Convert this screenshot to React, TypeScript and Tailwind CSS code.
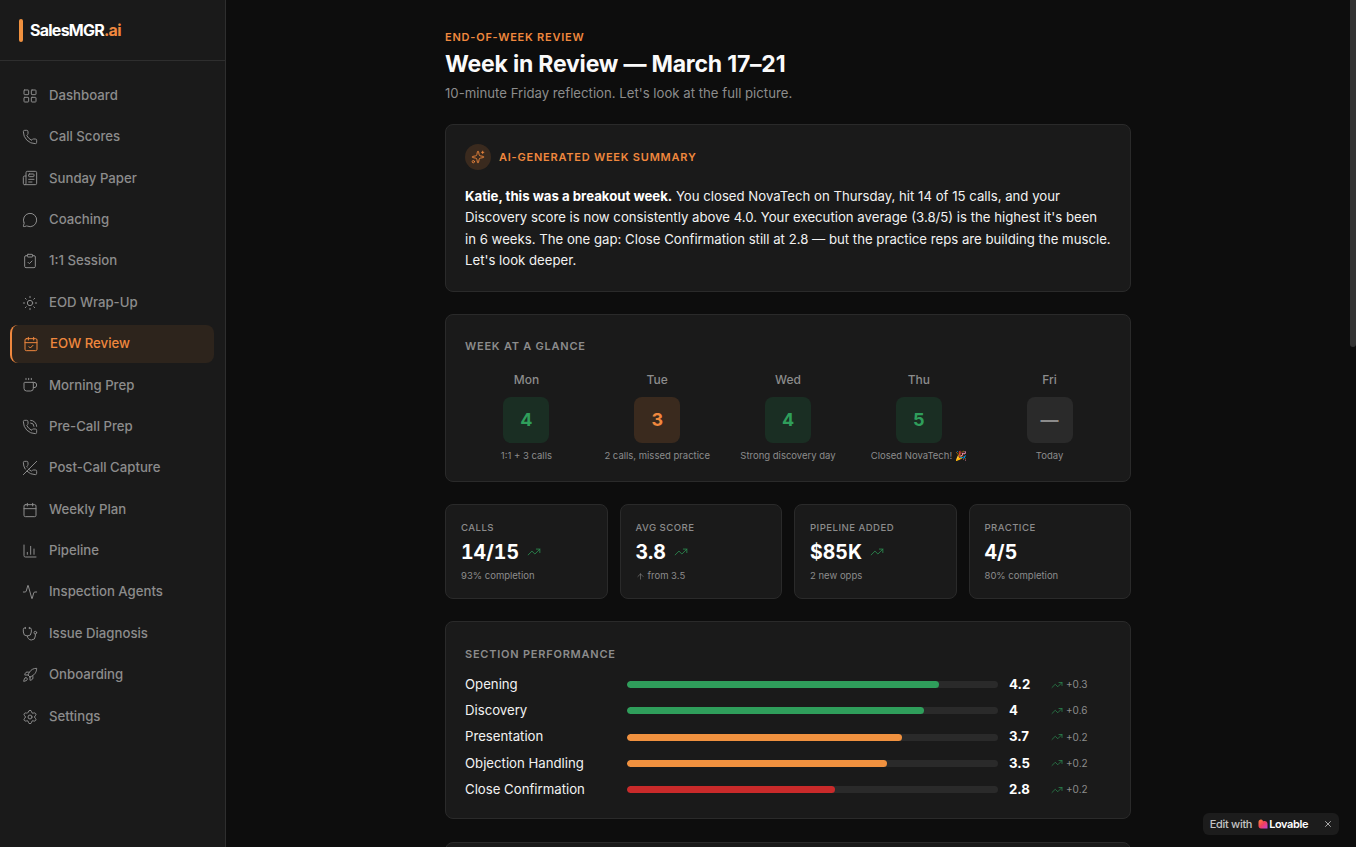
import {
  Activity, Calendar, CalendarCheck, ChartColumn, ClipboardCheck, Coffee, LayoutGrid, MessageCircle, Newspaper,
  Phone, PhoneCall, PhoneOff, Rocket, Settings, Sparkles, Stethoscope, Sun, TrendingUp, ArrowUp, X,
} from 'lucide-react'

const nav = [
  { label: 'Dashboard', icon: LayoutGrid },
  { label: 'Call Scores', icon: Phone },
  { label: 'Sunday Paper', icon: Newspaper },
  { label: 'Coaching', icon: MessageCircle },
  { label: '1:1 Session', icon: ClipboardCheck },
  { label: 'EOD Wrap-Up', icon: Sun },
  { label: 'EOW Review', icon: CalendarCheck, active: true },
  { label: 'Morning Prep', icon: Coffee },
  { label: 'Pre-Call Prep', icon: PhoneCall },
  { label: 'Post-Call Capture', icon: PhoneOff },
  { label: 'Weekly Plan', icon: Calendar },
  { label: 'Pipeline', icon: ChartColumn },
  { label: 'Inspection Agents', icon: Activity },
  { label: 'Issue Diagnosis', icon: Stethoscope },
  { label: 'Onboarding', icon: Rocket },
  { label: 'Settings', icon: Settings },
]

const days = [
  { day: 'Mon', score: '4', note: '1:1 + 3 calls', box: 'bg-[#1a2e23] text-[#2f9e5b]' },
  { day: 'Tue', score: '3', note: '2 calls, missed practice', box: 'bg-[#3a2a1e] text-[#f0883e]' },
  { day: 'Wed', score: '4', note: 'Strong discovery day', box: 'bg-[#1a2e23] text-[#2f9e5b]' },
  { day: 'Thu', score: '5', note: 'Closed NovaTech! 🎉', box: 'bg-[#1a2e23] text-[#2f9e5b]' },
  { day: 'Fri', score: '—', note: 'Today', box: 'bg-[#2a2a2a] text-[#8c8c8c]' },
]

const stats = [
  { label: 'CALLS', value: '14/15', note: '93% completion', trend: true },
  { label: 'AVG SCORE', value: '3.8', note: 'from 3.5', trend: true, up: true },
  { label: 'PIPELINE ADDED', value: '$85K', note: '2 new opps', trend: true },
  { label: 'PRACTICE', value: '4/5', note: '80% completion' },
]

const sections = [
  { name: 'Opening', score: '4.2', delta: '+0.3', fill: 'w-[84%] bg-[#2f9e5b]' },
  { name: 'Discovery', score: '4', delta: '+0.6', fill: 'w-[80%] bg-[#2f9e5b]' },
  { name: 'Presentation', score: '3.7', delta: '+0.2', fill: 'w-[74%] bg-[#f0913f]' },
  { name: 'Objection Handling', score: '3.5', delta: '+0.2', fill: 'w-[70%] bg-[#f0913f]' },
  { name: 'Close Confirmation', score: '2.8', delta: '+0.2', fill: 'w-[56%] bg-[#c92a2a]' },
]

export default function App() {
  return (
    <div className="flex h-screen bg-[#0d0d0d] font-['Inter',sans-serif] text-white overflow-hidden">
      {/* Sidebar */}
      <aside className="w-[226px] shrink-0 bg-[#1a1a1a] border-r border-[#2e2e2e] flex flex-col">
        <div className="h-[61px] shrink-0 border-b border-[#2e2e2e] flex items-center pl-[19px] gap-[7.5px]">
          <div className="w-[3.5px] h-[23px] rounded-full bg-[#f0913f]" />
          <span className="text-[16px] font-bold tracking-[-0.75px]">
            SalesMGR<span className="text-[#f0883e]">.ai</span>
          </span>
        </div>
        <nav className="flex flex-col gap-1 pt-[16px] pl-[10px] pr-[11px]">
          {nav.map(item => {
            const Icon = item.icon
            return (
              <div
                key={item.label}
                className={item.active
                  ? 'flex items-center gap-[11px] h-[37.4px] pl-[11px] rounded-lg bg-[#2d241c] border-l-2 border-[#f0883e] text-[#f0883e] text-[13.2px] font-medium'
                  : 'flex items-center gap-[11px] h-[37.4px] pl-[12px] rounded-lg text-[#8c8c8c] text-[13.2px] font-medium'}
              >
                <Icon size={16} strokeWidth={1.5} />
                <span>{item.label}</span>
              </div>
            )
          })}
        </nav>
      </aside>

      {/* Main */}
      <main className="flex-1 overflow-y-auto pr-[6px]">
        <div className="w-[686px] mx-auto pt-[29px] pb-8 flex flex-col">
          <p className="text-[11px] font-semibold tracking-[0.77px] text-[#f0883e] leading-[16px]">END-OF-WEEK REVIEW</p>
          <h1 className="text-[23px] font-bold tracking-[-0.2px] leading-[32px] mt-[3px] text-[#fafafa]">Week in Review — March 17–21</h1>
          <p className="text-[13.2px] text-[#8c8c8c] leading-[20px] mt-[3px]">10-minute Friday reflection. Let's look at the full picture.</p>

          <div className="mt-[21px] flex flex-col gap-[22.4px]">
            {/* AI summary */}
            <section className="h-[167.6px] bg-[#1a1a1a] border border-[#2a2a2a] rounded-lg px-[19px] pt-[19px]">
              <div className="flex items-center gap-2">
                <div className="w-[26px] h-[26px] rounded-full bg-[#3a2a1e] flex items-center justify-center text-[#f0883e]">
                  <Sparkles size={14} strokeWidth={1.5} />
                </div>
                <span className="text-[11px] font-semibold tracking-[0.77px] text-[#f0883e]">AI-GENERATED WEEK SUMMARY</span>
              </div>
              <p className="mt-[16px] text-[13.2px] leading-[21.4px] text-[#f2f2f2]">
                <strong className="font-bold text-white">Katie, this was a breakout week.</strong> You closed NovaTech on Thursday, hit 14 of 15 calls, and your Discovery score is now consistently above 4.0. Your execution average (3.8/5) is the highest it's been in 6 weeks. The one gap: Close Confirmation still at 2.8 — but the practice reps are building the muscle. Let's look deeper.
              </p>
            </section>

            {/* Week at a glance */}
            <section className="h-[168px] bg-[#1a1a1a] border border-[#2a2a2a] rounded-lg px-[19px] pt-[23px]">
              <h2 className="text-[11px] font-semibold tracking-[0.77px] text-[#8c8c8c] leading-[16px]">WEEK AT A GLANCE</h2>
              <div className="grid grid-cols-5 gap-2 mt-[18px]">
                {days.map(d => (
                  <div key={d.day} className="flex flex-col items-center">
                    <span className="text-[12px] font-medium text-[#8c8c8c] leading-[16px]">{d.day}</span>
                    <div className={`w-[46px] h-[46px] rounded-lg mt-[9px] flex items-center justify-center text-[18px] font-bold ${d.box}`}>{d.score}</div>
                    <span className="text-[9.5px] text-[#8c8c8c] leading-[14px] mt-[6px]">{d.note}</span>
                  </div>
                ))}
              </div>
            </section>

            {/* Stat cards */}
            <div className="grid grid-cols-4 gap-3">
              {stats.map(s => (
                <div key={s.label} className="h-[94.6px] bg-[#1a1a1a] border border-[#2a2a2a] rounded-lg px-[15px] pt-[16px]">
                  <p className="text-[9.6px] font-medium tracking-[0.45px] text-[#8c8c8c] leading-[14px]">{s.label}</p>
                  <div className="flex items-center gap-2 mt-[3px]">
                    <span className="text-[19.5px] font-bold tabular-nums leading-[28px] text-white">{s.value}</span>
                    {s.trend && <TrendingUp size={14} strokeWidth={1.5} className="text-[#2b8a50]" />}
                  </div>
                  <p className="flex items-center gap-[3px] text-[9.5px] text-[#8c8c8c] leading-[14px] mt-[3px]">
                    {s.up && <ArrowUp size={9} strokeWidth={1.5} />}
                    {s.note}
                  </p>
                </div>
              ))}
            </div>

            {/* Section performance */}
            <section className="h-[198px] bg-[#1a1a1a] border border-[#2a2a2a] rounded-lg px-[19px] pt-[24px]">
              <h2 className="text-[11px] font-semibold tracking-[0.77px] text-[#8c8c8c] leading-[16px]">SECTION PERFORMANCE</h2>
              <div className="flex flex-col mt-[9px]">
                {sections.map(s => (
                  <div key={s.name} className="flex items-center h-[26.3px]">
                    <span className="w-[162px] shrink-0 text-[13.2px] text-[#f2f2f2]">{s.name}</span>
                    <div className="w-[371px] shrink-0 h-[7px] rounded-full bg-[#2a2a2a] overflow-hidden">
                      <div className={`h-full rounded-full ${s.fill}`} />
                    </div>
                    <span className="w-[42px] pl-[11px] shrink-0 text-[13.2px] font-bold text-white">{s.score}</span>
                    <div className="flex items-center gap-[3px] ml-[11px] text-[10px] text-[#8c8c8c]">
                      <TrendingUp size={12} strokeWidth={1.5} className="text-[#2b8a50]" />
                      <span>{s.delta}</span>
                    </div>
                  </div>
                ))}
              </div>
            </section>

            {/* Next card, below the fold */}
            <section className="h-[1180px] bg-[#1a1a1a] border border-[#2a2a2a] rounded-lg" />
          </div>
        </div>
      </main>

      {/* Scrollbar thumb */}
      <div className="fixed top-0 right-0 w-[6px] h-[347px] rounded-b-full bg-[#333333]" />

      {/* Edit with Lovable badge */}
      <div className="fixed right-[17px] bottom-[12px] h-[22px] flex items-center rounded-md bg-[#1c1c1c] pl-[7px] pr-[6px] text-[11px]">
        <span className="text-[#c4c4c4] font-medium tracking-[-0.3px]">Edit with</span>
        <svg width="10" height="10" viewBox="0 0 10 10" className="ml-[6px]">
          <defs>
            <linearGradient id="lov" x1="0" y1="0" x2="1" y2="1">
              <stop offset="0" stopColor="#ff8a3c" />
              <stop offset="0.5" stopColor="#f0405e" />
              <stop offset="1" stopColor="#c43fd6" />
            </linearGradient>
          </defs>
          <path d="M3 0.5C4.4 0.5 5 1.6 5 2.4C5.6 1.9 6 1.9 6.6 1.9C8.2 1.9 9.5 3.2 9.5 4.8V9.5H3C1.4 9.5 0.5 8.2 0.5 6.8V3C0.5 1.6 1.6 0.5 3 0.5Z" fill="url(#lov)" />
        </svg>
        <span className="ml-[1px] font-semibold text-white tracking-[-0.4px]">Lovable</span>
        <X size={10} className="ml-[15px] text-[#c4c4c4]" />
      </div>
    </div>
  )
}
